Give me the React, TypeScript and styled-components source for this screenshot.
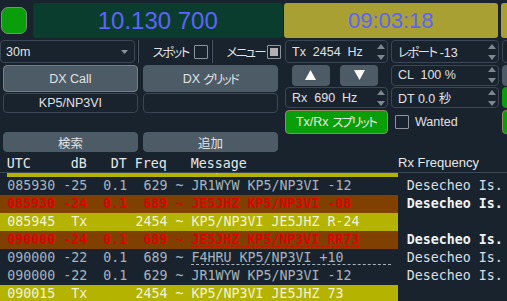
import styled, { createGlobalStyle } from 'styled-components'

const GlobalStyle = createGlobalStyle`
  html, body {
    margin: 0;
    padding: 0;
    background: #19232d;
    overflow: hidden;
  }
`

const ui = `"Liberation Sans", "Noto Sans CJK JP", sans-serif`
const mono = `"DejaVu Sans Mono", "Liberation Mono", monospace`

const Page = styled.div`
  width: 507px;
  height: 301px;
  overflow: hidden;
  background: #19232d;
  color: #e0e1e3;
  font-family: ${ui};
  font-size: 12.5px;
  font-feature-settings: "palt";
`

// katakana is drawn narrow in the original UI font
const Kana = styled.span`
  font-family: "Noto Sans CJK JP", sans-serif;
  font-size: 12.5px;
  letter-spacing: -1.7px;
`

/* ---------- top bar ---------- */

const TopBar = styled.div`
  display: flex;
  align-items: center;
  height: 35px;
  margin-top: 3px;
`

const Indicator = styled.div`
  flex: none;
  width: 26px;
  height: 27px;
  margin: 0 6px 0 1px;
  box-sizing: border-box;
  background: #0a9e0a;
  border: 1px solid #7f8a84;
  border-radius: 7px;
`

const Display = styled.div<{ $bg: string; $w: number; $size: number; $ml?: number }>`
  flex: none;
  width: ${p => p.$w}px;
  height: 35px;
  margin-left: ${p => p.$ml ?? 0}px;
  display: flex;
  align-items: center;
  justify-content: center;
  background: ${p => p.$bg};
  border-radius: 3px;
  color: #5b64fb;
  font-family: "Liberation Sans", sans-serif;
  font-size: ${p => p.$size}px;
`

/* ---------- controls ---------- */

const Controls = styled.div`
  display: flex;
  margin-top: 2px;
  height: 112px;
`

const LeftPanel = styled.div`
  flex: none;
  width: 280px;
  display: flex;
  flex-direction: column;
`

const OptionsRow = styled.div`
  display: flex;
  align-items: center;
  height: 23px;
`

const Combo = styled.div`
  flex: none;
  width: 135px;
  height: 23px;
  box-sizing: border-box;
  display: flex;
  align-items: center;
  justify-content: space-between;
  padding: 0 6px 0 5px;
  border: 1px solid #3b4655;
  border-radius: 4px;
`

const Sep = styled.div<{ $ml: number }>`
  flex: none;
  width: 0;
  height: 23px;
  margin-left: ${p => p.$ml}px;
  border-left: 1px solid #10171e;
  border-right: 1px solid #4a5563;
`

const OptLabel = styled.span<{ $ml: number; $w: number }>`
  flex: none;
  width: ${p => p.$w}px;
  margin-left: ${p => p.$ml}px;
  white-space: nowrap;
  overflow: hidden;
`

const Check = styled.span<{ $checked?: boolean }>`
  flex: none;
  width: 14px;
  height: 14px;
  box-sizing: border-box;
  border: 1px solid #8d949b;
  border-radius: 1px;
  background: ${p => (p.$checked ? '#b2b2b2' : '#19232d')};
  box-shadow: ${p => (p.$checked ? 'inset 0 0 0 2px #19232d' : 'none')};
`

const ButtonGrid = styled.div`
  display: grid;
  grid-template-columns: 135.5px 135.5px;
  grid-template-rows: 27px 20px 17px 20px;
  column-gap: 4.5px;
  row-gap: 1px;
  margin: 2px 0 0 2.7px;
`

const Button = styled.div<{ $focus?: boolean; $row: number }>`
  grid-row: ${p => p.$row};
  display: flex;
  align-items: center;
  justify-content: center;
  box-sizing: border-box;
  background: #4d5b66;
  border: 1px solid ${p => (p.$focus ? '#8a7a68' : '#4d5b66')};
  border-radius: 4px;
  white-space: pre;
`

const Field = styled.div`
  grid-row: 2;
  display: flex;
  align-items: center;
  justify-content: center;
  box-sizing: border-box;
  border: 1px solid #3b4655;
  border-radius: 4px;
`

const RightPanel = styled.div`
  flex: none;
  margin-left: 4.5px;
  display: grid;
  grid-template-columns: 103px 108px 60px;
  grid-template-rows: 23px 21px 21px 24px;
  column-gap: 3px;
  row-gap: 1.5px;
  align-self: flex-start;
`

const SpinBox = styled.div`
  display: flex;
  align-items: center;
  box-sizing: border-box;
  border: 1px solid #3b4655;
  border-radius: 4px;
  padding: 0 2px 0 6.5px;
  white-space: pre;
  overflow: hidden;
`

const SpinText = styled.span`
  flex: 1;
`

const ArrowCol = styled.div`
  display: flex;
  flex-direction: column;
  gap: 6px;
  svg {
    display: block;
  }
`

const SpinArrows = () => (
  <ArrowCol>
    <svg width="8" height="5">
      <path d="M0 5 L4 0 L8 5Z" fill="#7d8790" />
    </svg>
    <svg width="8" height="5">
      <path d="M0 0 L4 5 L8 0Z" fill="#7d8790" />
    </svg>
  </ArrowCol>
)

const StepRow = styled.div`
  display: flex;
  gap: 10.5px;
  padding-left: 7px;
`

const StepButton = styled.div`
  width: 38px;
  height: 21px;
  display: flex;
  align-items: center;
  justify-content: center;
  background: #4d5b66;
  border-radius: 4px;
`

const ColorButton = styled.div<{ $bg: string; $border: string }>`
  display: flex;
  align-items: center;
  justify-content: center;
  box-sizing: border-box;
  background: ${p => p.$bg};
  border: 1px solid ${p => p.$border};
  border-radius: 4px;
  color: #e6eee0;
  white-space: pre;
`

const CheckItem = styled.div`
  display: flex;
  align-items: center;
  gap: 6px;
  padding-left: 4.5px;
`

/* ---------- decode table ---------- */

const Header = styled.div`
  display: flex;
  height: 20px;
  border-bottom: 1px solid #3b4653;
  overflow: hidden;
`

const HeadLeft = styled.div`
  flex: none;
  width: 398px;
  height: 20px;
  box-sizing: border-box;
  padding: 2px 0 0 6.7px;
  font-family: ${mono};
  font-size: 13.3px;
  line-height: 20px;
  white-space: pre;
  color: #e6e8ea;
  overflow: hidden;
`

const HeadRight = styled.div`
  height: 17.5px;
  overflow: hidden;
  padding-top: 2px;
  box-sizing: border-box;
  font-size: 13px;
  line-height: 18px;
  color: #e6e8ea;
  white-space: pre;
`

const Table = styled.div`
  display: flex;
  height: 128px;
  overflow: hidden;
  font-family: ${mono};
  font-size: 13.3px;
  line-height: 18px;
  white-space: pre;
`

const LeftList = styled.div`
  flex: none;
  width: 398px;
  padding-top: 1px;
  overflow: hidden;
`

const RightList = styled.div`
  flex: 1;
  padding-top: 4px;
`

type Kind = 'normal' | 'red' | 'tx'

const rowBg: Record<Kind, string> = { normal: 'transparent', red: '#7f4000', tx: '#b4b400' }
const rowFg: Record<Kind, string> = { normal: '#aab4bc', red: '#e00000', tx: '#f4f2d6' }

const Row = styled.div<{ $kind: Kind; $partial?: boolean }>`
  height: 18px;
  padding-left: ${p => (p.$partial ? 0.3 : 7.3)}px;
  margin-left: ${p => (p.$partial ? 7 : 0)}px;
  margin-top: ${p => (p.$partial ? -15 : 0)}px;
  background: ${p => rowBg[p.$kind]};
  color: ${p => rowFg[p.$kind]};
  font-weight: ${p => (p.$kind === 'red' ? 'bold' : 'normal')};
`

const Dashed = styled.span`
  text-decoration: underline dashed;
  text-decoration-thickness: 1px;
  text-underline-offset: 1.5px;
`

const Country = styled.div<{ $bold?: boolean }>`
  height: 18px;
  padding-left: 8.7px;
  color: ${p => (p.$bold ? '#f2f2f2' : '#dcdfe2')};
  font-weight: ${p => (p.$bold ? 'bold' : 'normal')};
`

interface Decode {
  head: string
  msg: string
  kind: Kind
  underline?: boolean
  country?: string
  bold?: boolean
}

const decodes: Decode[] = [
  { head: '085930 -25  0.1  629 ~ ', msg: 'JR1WYW KP5/NP3VI -12', kind: 'normal', country: 'Desecheo Is.' },
  { head: '085930 -24  0.1  689 ~ ', msg: 'JE5JHZ KP5/NP3VI -08', kind: 'red', country: 'Desecheo Is.', bold: true },
  { head: '085945  Tx      2454 ~ ', msg: 'KP5/NP3VI JE5JHZ R-24', kind: 'tx' },
  { head: '090000 -24  0.1  689 ~ ', msg: 'JE5JHZ KP5/NP3VI RR73', kind: 'red', underline: true, country: 'Desecheo Is.', bold: true },
  { head: '090000 -22  0.1  689 ~ ', msg: 'F4HRU KP5/NP3VI +10      ', kind: 'normal', underline: true, country: 'Desecheo Is.' },
  { head: '090000 -22  0.1  629 ~ ', msg: 'JR1WYW KP5/NP3VI -12', kind: 'normal', country: 'Desecheo Is.' },
  { head: '090015  Tx      2454 ~ ', msg: 'KP5/NP3VI JE5JHZ 73', kind: 'tx' },
]

const Triangle = ({ down }: { down?: boolean }) => (
  <svg width="11" height="10">
    <path d={down ? 'M0 0 L11 0 L5.5 10Z' : 'M0 10 L11 10 L5.5 0Z'} fill="#ffffff" />
  </svg>
)

const App = () => {
  return (
    <Page>
      <GlobalStyle />
      <TopBar>
        <Indicator />
        <Display $bg="#0b3d2f" $w={249.5} $size={24}>10.130 700</Display>
        <Display $bg="#a8a032" $w={214.5} $size={22} $ml={1}>09:03:18</Display>
        <Display $bg="#a8a032" $w={40} $size={22} $ml={2.5} />
      </TopBar>

      <Controls>
        <LeftPanel>
          <OptionsRow>
            <Combo>
              <span>30m</span>
              <svg width="7" height="4">
                <path d="M0 0 L7 0 L3.5 4Z" fill="#8a939a" />
              </svg>
            </Combo>
            <Sep $ml={1.5} />
            <OptLabel $ml={14} $w={41}><Kana>スポット</Kana></OptLabel>
            <Check />
            <Sep $ml={3} />
            <OptLabel $ml={14} $w={40}><Kana>メニュー</Kana></OptLabel>
            <Check $checked />
          </OptionsRow>
          <ButtonGrid>
            <Button $row={1} $focus>DX Call</Button>
            <Button $row={1}>DX <Kana>グリッド</Kana></Button>
            <Field>KP5/NP3VI</Field>
            <Field />
            <Button $row={4}>検索</Button>
            <Button $row={4}>追加</Button>
          </ButtonGrid>
        </LeftPanel>

        <RightPanel>
          <SpinBox>
            <SpinText>{'Tx  2454  Hz'}</SpinText>
            <SpinArrows />
          </SpinBox>
          <SpinBox>
            <SpinText><Kana>レポート</Kana> -13</SpinText>
            <SpinArrows />
          </SpinBox>
          <SpinBox />

          <StepRow>
            <StepButton><Triangle /></StepButton>
            <StepButton><Triangle down /></StepButton>
          </StepRow>
          <SpinBox>
            <SpinText>{'CL  100 %'}</SpinText>
            <SpinArrows />
          </SpinBox>
          <ColorButton $bg="#4d5b66" $border="#4d5b66" />

          <SpinBox>
            <SpinText>{'Rx  690  Hz'}</SpinText>
            <SpinArrows />
          </SpinBox>
          <SpinBox>
            <SpinText>DT 0.0 秒</SpinText>
            <SpinArrows />
          </SpinBox>
          <ColorButton $bg="#0a9e0a" $border="#0a9e0a" />

          <ColorButton $bg="#0a9e0a" $border="#9a8466">Tx/Rx <Kana>スプリット</Kana></ColorButton>
          <CheckItem>
            <Check />
            <span>Wanted</span>
          </CheckItem>
          <ColorButton $bg="#0a9e0a" $border="#9a8466" />
        </RightPanel>
      </Controls>

      <Header>
        <HeadLeft>{'UTC     dB   DT Freq   Message'}</HeadLeft>
        <HeadRight>Rx Frequency</HeadRight>
      </Header>

      <Table>
        <LeftList>
          <Row $kind="tx" $partial>{'085915  Tx      2454 ~ KP5/NP3VI JE5JHZ -24'}</Row>
          {decodes.map((d, i) => (
            <Row key={i} $kind={d.kind}>
              {d.head}
              {d.underline ? <Dashed>{d.msg}</Dashed> : d.msg}
            </Row>
          ))}
        </LeftList>
        <RightList>
          {decodes.map((d, i) => (
            <Country key={i} $bold={d.bold}>{d.country ?? ' '}</Country>
          ))}
        </RightList>
      </Table>
    </Page>
  )
}

export default App
